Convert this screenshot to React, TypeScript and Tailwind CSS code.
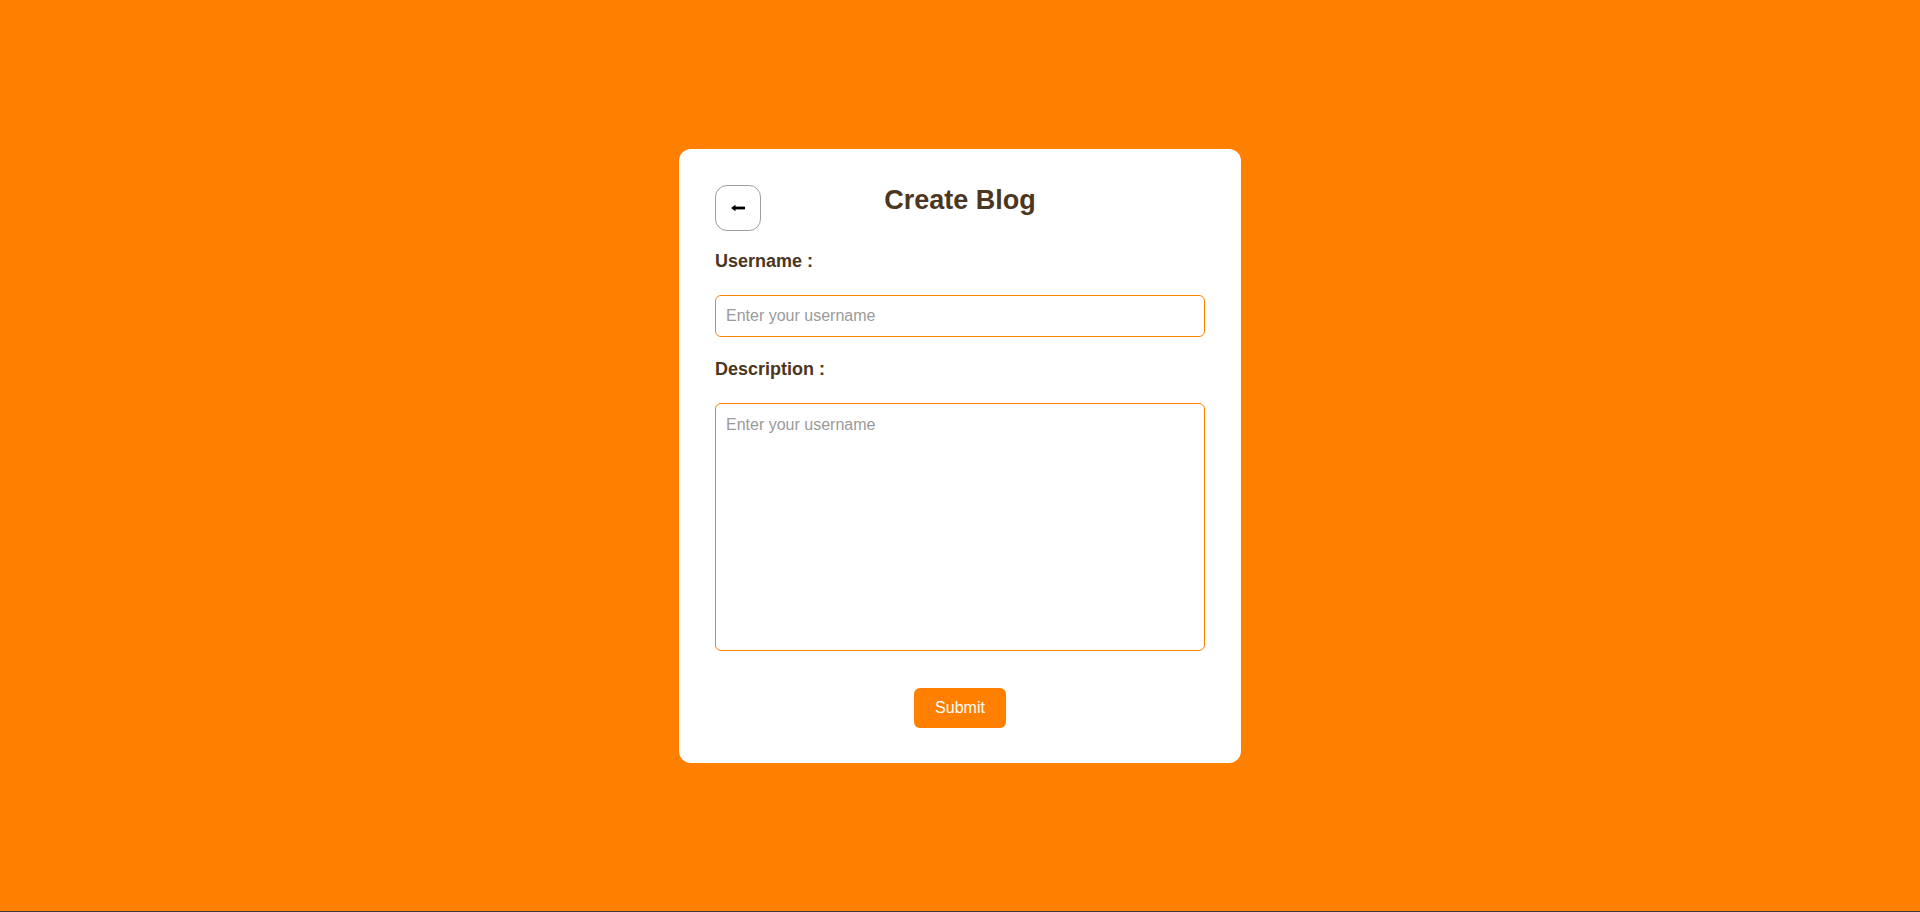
import React, { useState } from 'react';

const App: React.FC = () => {
  const [username, setUsername] = useState('');
  const [description, setDescription] = useState('');

  const handleSubmit = (e: React.FormEvent) => {
    e.preventDefault();
  };

  return (
    <div className="flex h-screen flex-col font-['Liberation_Sans',Arial,sans-serif]">
      <div className="flex flex-1 items-center justify-center bg-[#ff7f00]">
        <form
          onSubmit={handleSubmit}
          className="flex w-[562px] flex-col rounded-xl bg-white px-9 pt-9 pb-[35px]"
        >
          {/* header */}
          <div className="grid grid-cols-[46px_1fr_46px] items-start">
            <button
              type="button"
              className="flex h-[46px] w-[46px] items-center justify-center rounded-xl border border-[#9e9e9e] bg-white"
            >
              <svg width="14" height="8" viewBox="0 0 14 8" fill="#000">
                <polygon points="0,4 4.5,0.8 4.5,7.2" />
                <rect x="4" y="2.6" width="10" height="2.8" />
              </svg>
            </button>
            <h1 className="pt-px text-center text-[27px] leading-[28px] font-bold text-[#4b3621]">Create Blog</h1>
            <div />
          </div>

          <label className="mt-5 text-[18px] leading-5 font-bold text-[#4b3621]">Username :</label>
          <input
            type="text"
            value={username}
            onChange={(e) => setUsername(e.target.value)}
            placeholder="Enter your username"
            className="mt-6 h-[42px] w-full rounded-md border border-[#ff7f00] px-[10px] text-base text-[#333] outline-none placeholder:text-[#9a9a9a]"
          />

          <label className="mt-[22px] text-[18px] leading-5 font-bold text-[#4b3621]">Description :</label>
          <textarea
            value={description}
            onChange={(e) => setDescription(e.target.value)}
            placeholder="Enter your username"
            className="mt-6 h-[248px] w-full resize-none rounded-md border border-[#ff7f00] px-[10px] pt-[9px] pb-[10px] text-base text-[#333] outline-none placeholder:text-[#9a9a9a]"
          />

          <div className="mt-[37px] flex justify-center">
            <button
              type="submit"
              className="h-10 w-[92px] rounded-md bg-[#ff7f00] text-base text-white"
            >
              Submit
            </button>
          </div>
        </form>
      </div>
      <div className="h-px bg-[#3c3c3c]" />
    </div>
  );
};

export default App;
